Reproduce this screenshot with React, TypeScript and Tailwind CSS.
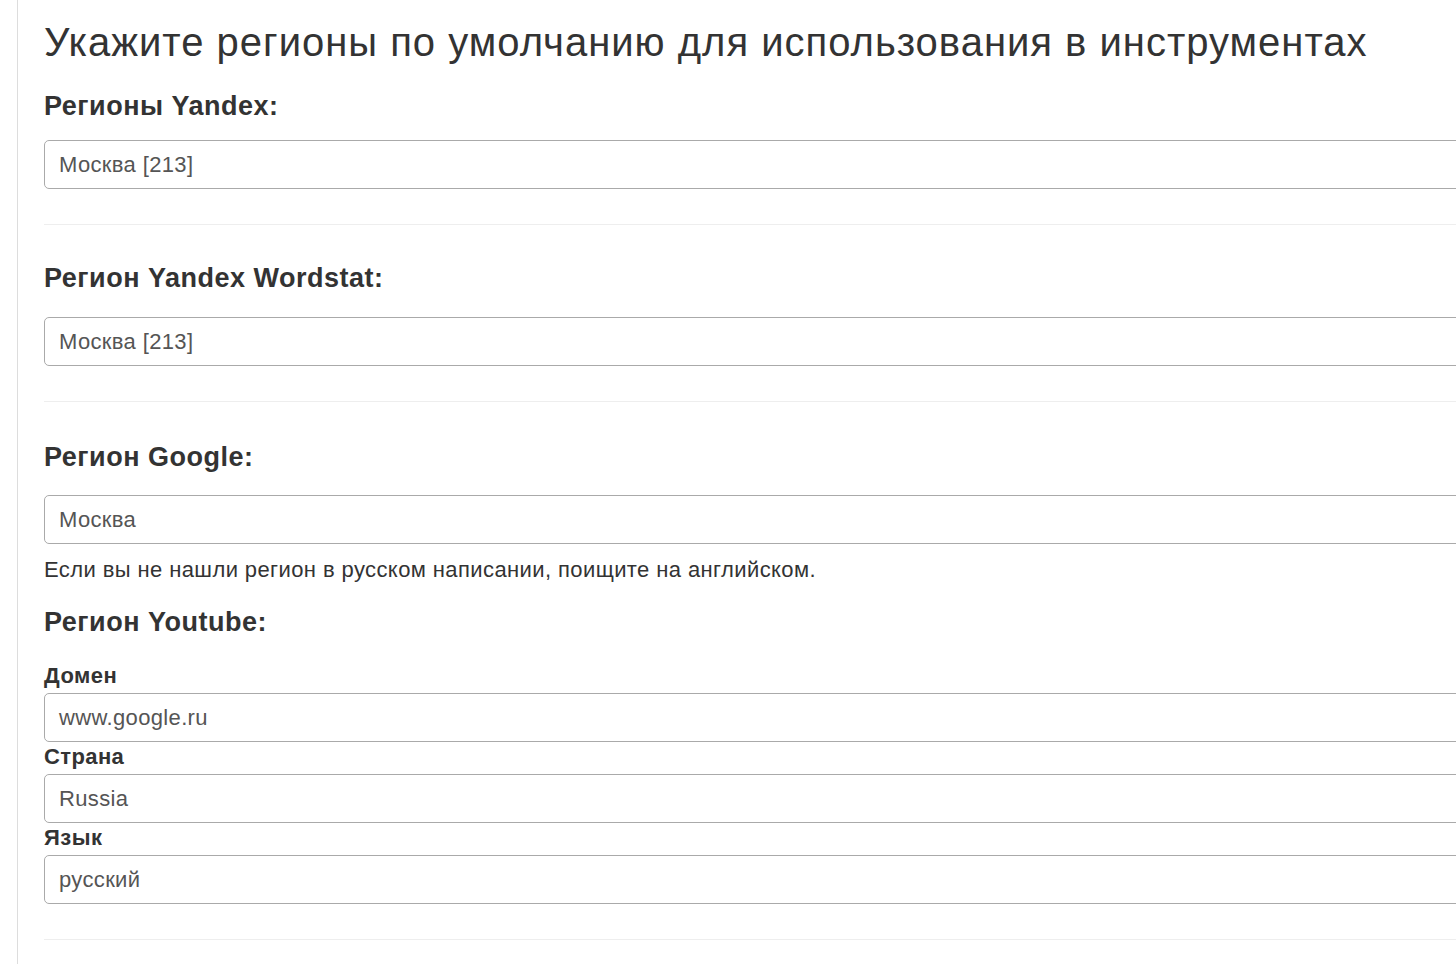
import React from "react";

const font = { fontFamily: '"Liberation Sans", Arial, sans-serif' };

function Field({ value }: { value: string }) {
  return (
    <div className="flex h-[49px] w-[1440px] items-center rounded-[5px] border border-[#aaaaaa] bg-white pl-[14px] text-[22px] tracking-[0.35px] text-[#555]">
      {value}
    </div>
  );
}

function Divider() {
  return <hr className="mt-[35px] w-[1440px] border-t border-[#eeeeee]" />;
}

export default function App() {
  return (
    <div className="min-h-screen bg-white text-[#333]" style={font}>
      <div className="ml-[17px] min-h-[964px] overflow-hidden border-l border-[#dddddd] pl-[26px]">
        <h1 className="pt-[20px] text-[40px] leading-[44px] tracking-[1px] whitespace-nowrap">
          Укажите регионы по умолчанию для использования в инструментах
        </h1>

        <h3 className="mt-[27px] text-[27px] leading-[30px] font-bold tracking-[0.5px]">Регионы Yandex:</h3>
        <div className="mt-[19px]">
          <Field value="Москва [213]" />
        </div>
        <Divider />

        <h3 className="mt-[38px] text-[27px] leading-[30px] font-bold tracking-[0.5px]">Регион Yandex Wordstat:</h3>
        <div className="mt-[24px]">
          <Field value="Москва [213]" />
        </div>
        <Divider />

        <h3 className="mt-[40px] text-[27px] leading-[30px] font-bold tracking-[0.5px]">Регион Google:</h3>
        <div className="mt-[23px]">
          <Field value="Москва" />
        </div>
        <p className="mt-[12px] text-[22px] leading-[28px] tracking-[0.4px]">
          Если вы не нашли регион в русском написании, поищите на английском.
        </p>

        <h3 className="mt-[23px] text-[27px] leading-[30px] font-bold tracking-[0.5px]">Регион Youtube:</h3>
        <div className="mt-[26px] mb-[4px] text-[22px] leading-[26px] font-bold tracking-[0.5px]">Домен</div>
        <Field value="www.google.ru" />
        <div className="mt-[1.5px] mb-[4px] text-[22px] leading-[26px] font-bold tracking-[0.4px]">Страна</div>
        <Field value="Russia" />
        <div className="mt-[2.5px] mb-[4px] text-[22px] leading-[26px] font-bold tracking-[0.5px]">Язык</div>
        <Field value="русский" />
        <Divider />
      </div>
    </div>
  );
}
